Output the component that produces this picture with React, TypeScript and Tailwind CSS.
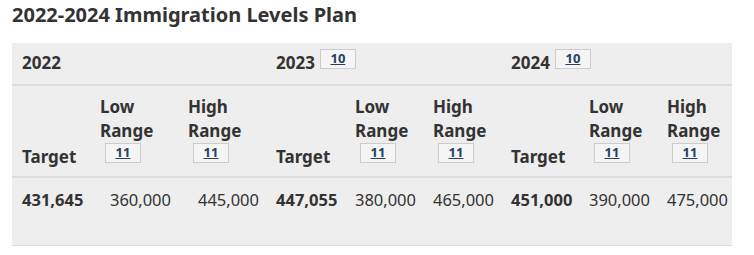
const cols = "grid grid-cols-[80px_88px_88px_79px_78px_78px_78px_78px_78px] w-[725px]";

function Note({ n, className = "" }: { n: string; className?: string }) {
  return (
    <span
      className={`inline-flex h-[20px] w-[36px] items-center justify-center border border-[#cccccc] bg-[#f5f5f5] ${className}`}
    >
      <a href="#" className="text-[13px] leading-[14px] font-bold text-[#284162] underline -mt-[2px]">
        {n}
      </a>
    </span>
  );
}

const years = [
  { year: "2022", note: false, target: "431,645", low: "360,000", high: "445,000" },
  { year: "2023", note: true, target: "447,055", low: "380,000", high: "465,000" },
  { year: "2024", note: true, target: "451,000", low: "390,000", high: "475,000" },
];

export default function App() {
  return (
    <div className="min-h-screen bg-white text-[#333333] font-['Noto_Sans',sans-serif]">
      <h2 className="pl-[12px] pt-[1px] text-[20px] leading-[27px] font-bold">
        2022-2024 Immigration Levels Plan
      </h2>

      <div className="ml-[12px] mt-[15px] w-[720px] overflow-hidden bg-[#eeeeee] text-[16.5px] leading-[24px]">
        {/* year row */}
        <div className={`${cols} h-[43px] border-b-2 border-[#dddddd] text-[17px]`}>
          {years.map((y, i) => (
            <div
              key={y.year}
              className={`col-span-3 flex items-start font-bold ${i === 0 ? "pl-[10px]" : "pl-[8px]"}`}
            >
              <span className="mt-[8px]">{y.year}</span>
              {y.note && <Note n="10" className="ml-[5px] mt-[6px]" />}
            </div>
          ))}
        </div>

        {/* column headings */}
        <div className={`${cols} h-[92px] border-b-2 border-[#dddddd] font-bold text-[17px]`}>
          {years.map((y, i) => (
            <div key={y.year} className="contents">
              <div className={`flex flex-col justify-end pb-[7px] ${i === 0 ? "pl-[10px]" : "pl-[8px]"}`}>
                Target
              </div>
              <div className="flex flex-col justify-end pl-[8px] pb-[7px]">
                <span>Low</span>
                <span>Range</span>
                <Note n="11" className="ml-[5px] mb-[6px]" />
              </div>
              <div className="flex flex-col justify-end pl-[8px] pb-[7px]">
                <span>High</span>
                <span>Range</span>
                <Note n="11" className="ml-[5px] mb-[6px]" />
              </div>
            </div>
          ))}
        </div>

        {/* values */}
        <div className={`${cols} h-[68px] border-b border-[#dddddd]`}>
          {years.map((y, i) => (
            <div key={y.year} className="contents">
              <div className={`pt-[10px] font-bold ${i === 0 ? "pl-[10px]" : "pl-[8px]"}`}>{y.target}</div>
              <div className="pt-[10px] pr-[9px] text-right">{y.low}</div>
              <div className="pt-[10px] pr-[9px] text-right">{y.high}</div>
            </div>
          ))}
        </div>
      </div>
    </div>
  );
}
